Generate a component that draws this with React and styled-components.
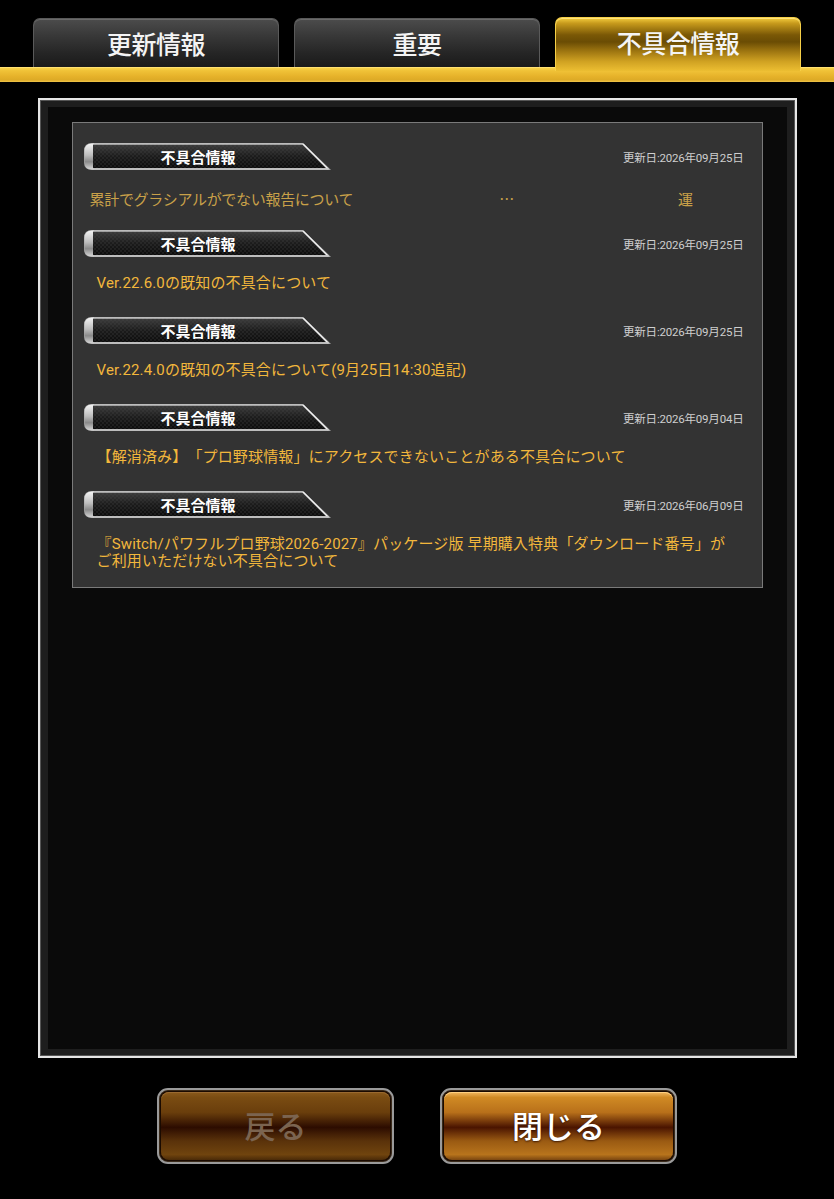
import React from 'react'
import styled, { createGlobalStyle } from 'styled-components'

const GlobalStyle = createGlobalStyle`
  html, body {
    margin: 0;
    padding: 0;
    background: #000;
  }
  body {
    font-family: Roboto, "Noto Sans CJK JP", sans-serif;
    color: #fff;
    text-spacing-trim: space-all;
  }
`

const Screen = styled.div`
  width: 834px;
  height: 1199px;
  background: #000;
  display: flex;
  flex-direction: column;
  align-items: center;
  padding-top: 17px;
  box-sizing: border-box;
  overflow: hidden;
`

const TabBar = styled.div`
  width: 100%;
  display: flex;
  flex-direction: column;
`

const TabRow = styled.div`
  display: flex;
  gap: 15px;
  padding-left: 33px;
  height: 50px;
  align-items: flex-end;
`

const Tab = styled.div`
  width: 246px;
  height: ${p => (p.active ? '54px' : '49px')};
  margin-bottom: ${p => (p.active ? '-4px' : '0')};
  position: relative;
  z-index: ${p => (p.active ? 2 : 1)};
  box-sizing: border-box;
  border-radius: 7px 7px 0 0;
  display: flex;
  align-items: center;
  justify-content: center;
  padding-bottom: ${p => (p.active ? '6px' : '0')};
  font-family: "Noto Sans CJK JP", sans-serif;
  font-weight: 500;
  font-size: 25px;
  letter-spacing: -0.5px;
  color: #f4f4f4;
  border: 1px solid ${p => (p.active ? '#f6d048' : '#5a5a5a')};
  border-bottom: none;
  background: ${p =>
    p.active
      ? 'linear-gradient(180deg, #f4cc3e 0%, #c79a1c 10%, #7a5806 32%, #6a4c04 45%, #9c7410 62%, #d0a222 82%, #ecbe32 100%)'
      : 'linear-gradient(180deg, #4c4c4c 0%, #383838 35%, #262626 70%, #1a1a1a 100%)'};
  box-shadow: ${p => (p.active ? 'inset 0 1px 0 #ffe27a' : 'inset 0 1px 0 #6a6a6a')};
`

const GoldLine = styled.div`
  height: 15px;
  background: linear-gradient(180deg, #f7d24a 0%, #f0c237 20%, #e6b22a 60%, #ddaa26 85%, #f0c64a 100%);
  border-top: 1px solid #ffe070;
  box-sizing: border-box;
  position: relative;
  z-index: 1;
`

const Panel = styled.div`
  margin-top: 16px;
  width: 759px;
  height: 960px;
  box-sizing: border-box;
  border: 2px solid #e6e6e6;
  background: #1e1e1e;
  padding: 7px 8px;
  box-shadow: inset 0 0 0 1px #555;
`

const PanelInner = styled.div`
  height: 100%;
  background: #0a0a0a;
  padding: 15px 24px;
  box-sizing: border-box;
`

const NewsBox = styled.div`
  background: #333333;
  border: 1px solid #7a7a7a;
  padding: 20px 18px 17px 11px;
  display: flex;
  flex-direction: column;
  gap: 25px;
`

const Item = styled.div`
  display: flex;
  flex-direction: column;
`

const ItemHead = styled.div`
  display: flex;
  align-items: center;
  justify-content: space-between;
  height: 27px;
`

const Label = styled.div`
  width: 247px;
  height: 27px;
  position: relative;
  display: flex;
  align-items: center;
  justify-content: center;
  padding-right: 18px;
  box-sizing: border-box;
`

const LabelArt = styled.svg`
  position: absolute;
  inset: 0;
`

const LabelText = styled.span`
  position: relative;
  font-family: "Noto Sans CJK JP", sans-serif;
  font-weight: 700;
  font-size: 15px;
  color: #fff;
`

const DateText = styled.span`
  font-family: Roboto, "Noto Sans CJK JP", sans-serif;
  font-size: 11.5px;
  color: #cfcfcf;
  letter-spacing: -0.2px;
  margin-top: 1px;
`

const Title = styled.div`
  margin-top: ${p => (p.dim ? '20px' : '18px')};
  margin-bottom: ${p => (p.dim ? '-4px' : '0')};
  padding-left: ${p => (p.dim ? '6px' : '13px')};
  font-size: 15px;
  line-height: 17px;
  color: ${p => (p.dim ? '#c9a149' : '#f2b73c')};
  letter-spacing: ${p => (p.dim ? '-0.3px' : '0.15px')};
  white-space: pre-wrap;
`

const Dots = styled.span`
  margin-left: 146px;
  font-family: "Noto Sans CJK JP", sans-serif;
  line-height: 17px;
`

const Trail = styled.span`
  margin-left: 164px;
`

const ButtonRow = styled.div`
  margin-top: 30px;
  display: flex;
  gap: 46px;
`

const Button = styled.div`
  width: 237px;
  height: 76px;
  box-sizing: border-box;
  border-radius: 11px;
  border: 2px solid #9a9a9a;
  padding: 2px;
  background: #1a0a00;
  box-shadow: inset 0 0 0 1px #3a2a1a;
`

const ButtonFace = styled.div`
  height: 100%;
  border-radius: 8px;
  display: flex;
  align-items: center;
  justify-content: center;
  padding-bottom: 3px;
  box-sizing: border-box;
  font-family: "Noto Sans CJK JP", sans-serif;
  font-size: 31px;
  font-weight: 500;
  color: ${p => (p.disabled ? '#7b6450' : '#ffffff')};
  text-shadow: ${p => (p.disabled ? 'none' : '0 1px 2px rgba(40,10,0,0.8)')};
  background: ${p =>
    p.disabled
      ? 'linear-gradient(180deg, #8a5a1c 0%, #7a4c12 8%, #6a3e0c 30%, #2c0c00 52%, #5a320a 72%, #70440e 92%, #4a2a08 100%)'
      : 'linear-gradient(180deg, #f2b860 0%, #d08a24 8%, #b8701a 30%, #4a1400 52%, #9a5a12 72%, #b8741c 92%, #7a4610 100%)'};
  box-shadow: inset 0 1px 0 ${p => (p.disabled ? '#9a6a30' : '#ffd080')};
`

const items = [
  { date: '2026年09月25日', dim: true },
  { date: '2026年09月25日', title: 'Ver.22.6.0の既知の不具合について' },
  { date: '2026年09月25日', title: 'Ver.22.4.0の既知の不具合について(9月25日14:30追記)' },
  { date: '2026年09月04日', title: '【解消済み】「プロ野球情報」にアクセスできないことがある不具合について' },
  {
    date: '2026年06月09日',
    title: '『Switch/パワフルプロ野球2026-2027』パッケージ版 早期購入特典「ダウンロード番号」が\nご利用いただけない不具合について',
  },
]

const BugLabel = ({ id }) => (
  <Label>
    <LabelArt width="247" height="27" viewBox="0 0 247 27">
      <defs>
        <linearGradient id={`silver${id}`} x1="0" y1="0" x2="0" y2="1">
          <stop offset="0" stopColor="#f4f4f4" />
          <stop offset="0.45" stopColor="#bdbdbd" />
          <stop offset="0.7" stopColor="#8a8a8a" />
          <stop offset="1" stopColor="#d8d8d8" />
        </linearGradient>
        <linearGradient id={`body${id}`} x1="0" y1="0" x2="0" y2="1">
          <stop offset="0" stopColor="#3c3c3c" />
          <stop offset="0.5" stopColor="#1c1c1c" />
          <stop offset="1" stopColor="#0c0c0c" />
        </linearGradient>
        <pattern id={`hex${id}`} width="4" height="4" patternUnits="userSpaceOnUse">
          <circle cx="1" cy="1" r="0.8" fill="#4a4a4a" opacity="0.55" />
          <circle cx="3" cy="3" r="0.8" fill="#4a4a4a" opacity="0.55" />
        </pattern>
      </defs>
      <path d="M8 0 H219 L247 27 H8 Q0 27 0 19 V8 Q0 0 8 0 Z" fill="#a8a8a8" />
      <path d="M8 0.5 H10 V26.5 H8 Q0.5 26.5 0.5 19 V8 Q0.5 0.5 8 0.5 Z" fill={`url(#silver${id})`} />
      <path d="M9 1.5 H218.5 L242.5 25 H9 Z" fill={`url(#body${id})`} />
      <path d="M9 1.5 H218.5 L242.5 25 H9 Z" fill={`url(#hex${id})`} />
      <path d="M9 1 H219" stroke="#d0d0d0" strokeWidth="1" />
      <path d="M219 1 L244 26" stroke="#f0f0f0" strokeWidth="1.4" />
      <path d="M9 26 H245" stroke="#c4c4c4" strokeWidth="1.6" />
    </LabelArt>
    <LabelText>不具合情報</LabelText>
  </Label>
)

export default function App() {
  return (
    <>
      <GlobalStyle />
      <Screen>
        <TabBar>
          <TabRow>
            <Tab>更新情報</Tab>
            <Tab>重要</Tab>
            <Tab active>不具合情報</Tab>
          </TabRow>
          <GoldLine />
        </TabBar>

        <Panel>
          <PanelInner>
            <NewsBox>
              {items.map((item, i) => (
                <Item key={i}>
                  <ItemHead>
                    <BugLabel id={i} />
                    <DateText>更新日:{item.date}</DateText>
                  </ItemHead>
                  {item.dim ? (
                    <Title dim>
                      累計でグラシアルがでない報告について
                      <Dots>…</Dots>
                      <Trail>運</Trail>
                    </Title>
                  ) : (
                    <Title>{item.title}</Title>
                  )}
                </Item>
              ))}
            </NewsBox>
          </PanelInner>
        </Panel>

        <ButtonRow>
          <Button>
            <ButtonFace disabled>戻る</ButtonFace>
          </Button>
          <Button>
            <ButtonFace>閉じる</ButtonFace>
          </Button>
        </ButtonRow>
      </Screen>
    </>
  )
}
